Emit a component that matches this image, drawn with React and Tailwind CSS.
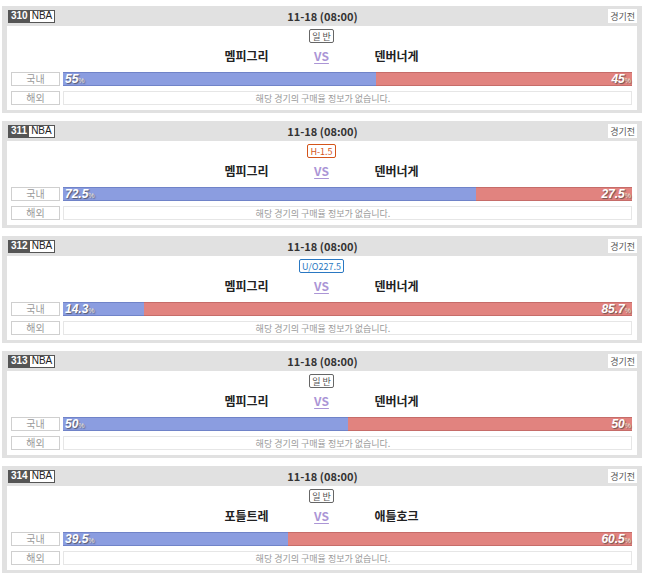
import React from 'react'

const games = [
  { no: 310, tag: '일 반', kind: 'normal', home: '멤피그리', away: '덴버너게', h: '55', a: '45' },
  { no: 311, tag: 'H-1.5', kind: 'handi', home: '멤피그리', away: '덴버너게', h: '72.5', a: '27.5' },
  { no: 312, tag: 'U/O227.5', kind: 'uo', home: '멤피그리', away: '덴버너게', h: '14.3', a: '85.7' },
  { no: 313, tag: '일 반', kind: 'normal', home: '멤피그리', away: '덴버너게', h: '50', a: '50' },
  { no: 314, tag: '일 반', kind: 'normal', home: '포틀트레', away: '애틀호크', h: '39.5', a: '60.5' },
]

const tagStyle = {
  normal: 'border-[#666] text-[#555]',
  handi: 'border-[#d4541a] text-[#d4541a]',
  uo: 'border-[#2a78c2] text-[#2a78c2]',
}

function Pct({ value }) {
  return (
    <span className="font-['Liberation_Sans',sans-serif] italic font-bold text-[12px] leading-none text-white [text-shadow:1px_1px_1px_rgba(60,60,60,0.7)]">
      {value}
      <span className="text-[7px] not-italic font-normal text-[#f3e9d8]">%</span>
    </span>
  )
}

function Label({ children }) {
  return (
    <div className="w-[49px] h-[14px] border border-[#cfcfcf] bg-white flex items-center justify-center text-[10px] leading-none text-[#9a9a9a]">
      {children}
    </div>
  )
}

function GameCard({ g }) {
  return (
    <div className="w-[640px] bg-[#e1e1e1] px-[5px] pb-[3px] mb-[8px]">
      {/* header */}
      <div className="h-[20px] flex items-center">
        <div className="flex-1 basis-0 flex pl-[1px]">
          <div className="flex h-[13px] border border-[#555] text-[10px] leading-none font-['Liberation_Sans',sans-serif]">
            <span className="bg-[#555] text-white font-bold px-[2px] flex items-center">{g.no}</span>
            <span className="bg-white text-[#222] px-[2px] flex items-center">NBA</span>
          </div>
        </div>
        <div className="text-[11px] font-bold text-[#333] leading-none">11-18 (08:00)</div>
        <div className="flex-1 basis-0 flex justify-end">
          <span className="bg-white h-[14px] px-[2px] flex items-center text-[9px] text-[#555] leading-none">경기전</span>
        </div>
      </div>
      {/* body */}
      <div className="bg-white pt-[3px] pl-[4px] pr-[5px] pb-[5px]">
        <div className="flex justify-center">
          <span className={`h-[14px] px-[2px] border rounded-[2px] flex items-center text-[9px] leading-none ${tagStyle[g.kind]}`}>
            {g.tag}
          </span>
        </div>
        <div className="h-[26px] mb-[3px] flex items-center justify-center text-[12px] font-bold text-[#222]">
          <div className="w-[120px] text-center">{g.home}</div>
          <div className="w-[30px] text-center text-[#ab95d6] underline underline-offset-2">VS</div>
          <div className="w-[120px] text-center">{g.away}</div>
        </div>
        <div className="flex gap-[3px] h-[14px] mb-[5px]">
          <Label>국내</Label>
          <div className="flex-1 flex">
            <div
              className="bg-[#8b9de0] border-y border-[#7083c8] flex items-center pl-[2px]"
              style={{ width: `${g.h}%` }}
            >
              <Pct value={g.h} />
            </div>
            <div className="flex-1 bg-[#e1837f] border-y border-[#c66c69] flex items-center justify-end pr-[1px]">
              <Pct value={g.a} />
            </div>
          </div>
        </div>
        <div className="flex gap-[3px] h-[14px]">
          <Label>해외</Label>
          <div className="flex-1 border border-[#e6e6e6] flex items-center justify-center pr-[49px] text-[9px] leading-none text-[#9a9a9a]">
            해당 경기의 구매율 정보가 없습니다.
          </div>
        </div>
      </div>
    </div>
  )
}

export default function App() {
  return (
    <div className="w-[647px] h-[581px] bg-white pt-[6px] pl-[2px] font-['Noto_Sans_CJK_KR','Noto_Sans',sans-serif] overflow-hidden">
      {games.map((g) => (
        <GameCard key={g.no} g={g} />
      ))}
    </div>
  )
}
